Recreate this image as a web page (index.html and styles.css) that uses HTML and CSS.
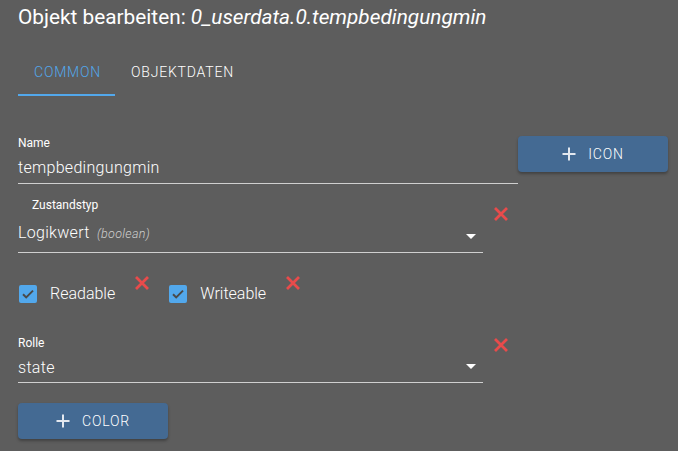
FILE: index.html
```html
<!DOCTYPE html>
<html lang="de">
  <head>
    <meta charset="UTF-8" />
    <title>Objekt bearbeiten</title>
    <link rel="stylesheet" href="styles.css">
  </head>
  <body>
    <h2 class="title">Objekt bearbeiten: <i>0_userdata.0.tempbedingungmin</i></h2>

    <div class="tabs">
      <div class="tab active">COMMON</div>
      <div class="tab">OBJEKTDATEN</div>
    </div>

    <div class="form">
      <div class="row">
        <div class="field name-field">
          <label>Name</label>
          <div class="value">tempbedingungmin</div>
        </div>
        <button class="btn icon-btn">
          <svg class="plus" width="14" height="14" viewBox="0 0 14 14"><path d="M7 0.5v13M0.5 7h13" stroke="#e3e8ef" stroke-width="2"/></svg>
          ICON
        </button>
      </div>

      <div class="row">
        <div class="field select-field type-field">
          <label class="indent">Zustandstyp</label>
          <div class="value">Logikwert <span class="hint">(boolean)</span></div>
          <span class="arrow"></span>
        </div>
        <svg class="remove type-remove" width="16" height="16" viewBox="0 0 16 16"><path d="M2 2L14 14M14 2L2 14" stroke="#e84b4b" stroke-width="2.8"/></svg>
      </div>

      <div class="checks">
        <label class="check"><span class="box">
          <svg width="18" height="18" viewBox="0 0 18 18"><path d="M4 9.2l3.2 3.2L14 5.6" fill="none" stroke="#4a4a4a" stroke-width="2"/></svg>
        </span>Readable</label>
        <svg class="remove small" width="16" height="16" viewBox="0 0 16 16"><path d="M2 2L14 14M14 2L2 14" stroke="#e84b4b" stroke-width="2.8"/></svg>
        <label class="check"><span class="box">
          <svg width="18" height="18" viewBox="0 0 18 18"><path d="M4 9.2l3.2 3.2L14 5.6" fill="none" stroke="#4a4a4a" stroke-width="2"/></svg>
        </span>Writeable</label>
        <svg class="remove small" width="16" height="16" viewBox="0 0 16 16"><path d="M2 2L14 14M14 2L2 14" stroke="#e84b4b" stroke-width="2.8"/></svg>
      </div>

      <div class="row">
        <div class="field select-field role-field">
          <label>Rolle</label>
          <div class="value">state</div>
          <span class="arrow"></span>
        </div>
        <svg class="remove role-remove" width="16" height="16" viewBox="0 0 16 16"><path d="M2 2L14 14M14 2L2 14" stroke="#e84b4b" stroke-width="2.8"/></svg>
      </div>

      <button class="btn color-btn">
        <svg class="plus" width="14" height="14" viewBox="0 0 14 14"><path d="M7 0.5v13M0.5 7h13" stroke="#e3e8ef" stroke-width="2"/></svg>
        COLOR
      </button>
    </div>
  </body>
</html>
```

FILE: styles.css
```css
body {
  margin: 0;
  background-color: #5d5d5d;
  font-family: Roboto, "Liberation Sans", sans-serif;
  font-weight: 300;
  color: #fff;
  width: 678px;
  height: 451px;
  overflow: hidden;
}

.title {
  margin: 0;
  padding: 4px 18px 0;
  font-size: 20.8px;
  font-weight: 400;
  line-height: 26px;
}

.title i {
  font-style: italic;
}

.tabs {
  display: flex;
  margin: 18px 0 0 18px;
  height: 48px;
}

.tab {
  height: 46px;
  padding: 0 16px;
  font-size: 14px;
  line-height: 48px;
  border-bottom: 2px solid transparent;
  letter-spacing: 0.8px;
  color: #fff;
}

.tab.active {
  color: #52a8ec;
  border-bottom-color: #52a8ec;
  width: 65px;
}

.form {
  padding: 0 0 0 18px;
  margin-top: 40px;
}

.row {
  display: flex;
  align-items: flex-start;
}

.field {
  position: relative;
  flex-shrink: 0;
  border-bottom: 1px solid #cfcfcf;
}

.field label {
  display: block;
  font-size: 12px;
  line-height: 15px;
  font-weight: 400;
}

.field label.indent {
  padding-left: 14px;
}

.value {
  font-size: 16px;
  line-height: 20px;
  padding: 10px 0 8px;
  letter-spacing: 0.3px;
}

.name-field {
  width: 500px;
  height: 47px;
}

.name-field .value {
  padding-top: 7px;
}

.type-field {
  width: 465px;
  margin-top: 14px;
}

.role-field {
  width: 465px;
  height: 46px;
  margin-top: 22px;
}

.role-field .value {
  padding-top: 7px;
}

.hint {
  font-size: 12.5px;
  font-style: italic;
  color: #cfcfcf;
  margin-left: 3px;
}

.arrow {
  position: absolute;
  right: 7px;
  bottom: 13px;
  border-left: 5px solid transparent;
  border-right: 5px solid transparent;
  border-top: 5px solid #fff;
}

.btn {
  display: flex;
  align-items: center;
  justify-content: center;
  flex-shrink: 0;
  width: 150px;
  height: 36px;
  padding: 0;
  border: none;
  border-radius: 4px;
  background-color: #446a93;
  color: #fff;
  font-family: Roboto, "Liberation Sans", sans-serif;
  font-weight: 300;
  font-size: 14px;
  letter-spacing: 0.8px;
  box-shadow: 0 2px 3px rgba(0, 0, 0, 0.3);
}

.plus {
  margin-right: 12px;
}

.remove {
  display: block;
  flex-shrink: 0;
  margin-left: 10px;
}

.type-remove {
  margin-top: 22px;
}

.role-remove {
  margin-top: 23px;
}

.checks {
  display: flex;
  align-items: flex-start;
  margin-top: 21px;
  height: 40px;
}

.check {
  display: flex;
  align-items: center;
  font-size: 16px;
  line-height: 19px;
  margin-top: 10px;
}

.box {
  width: 18px;
  height: 18px;
  border-radius: 2px;
  background-color: #52a8ec;
  margin-right: 13px;
  margin-left: 1px;
}

.box svg {
  display: block;
}

.remove.small {
  margin: 1px 18px 0 19px;
}

.color-btn {
  margin-top: 20px;
}
```
